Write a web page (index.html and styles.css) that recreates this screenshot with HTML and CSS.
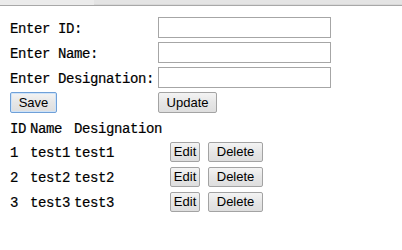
FILE: index.html
```html
<!DOCTYPE html>
<html>
<head>
<meta charset="utf-8">
<link rel="stylesheet" href="styles.css">
</head>
<body>
<div class="topbar"><div class="topbar-seg"></div></div>
<div class="page">
  <table class="form">
    <tr><td class="label">Enter ID:</td><td><input class="field" type="text"></td></tr>
    <tr><td class="label">Enter Name:</td><td><input class="field" type="text"></td></tr>
    <tr><td class="label">Enter Designation:</td><td><input class="field" type="text"></td></tr>
    <tr><td><button class="btn btn-save">Save</button></td><td><button class="btn btn-update">Update</button></td></tr>
  </table>
  <table class="list">
    <tr class="head"><td>ID</td><td>Name</td><td>Designation</td><td></td></tr>
    <tr><td class="num">1</td><td>test1</td><td>test1</td><td class="actions"><button class="btn btn-edit">Edit</button><button class="btn btn-del">Delete</button></td></tr>
    <tr><td class="num">2</td><td>test2</td><td>test2</td><td class="actions"><button class="btn btn-edit">Edit</button><button class="btn btn-del">Delete</button></td></tr>
    <tr><td class="num">3</td><td>test3</td><td>test3</td><td class="actions"><button class="btn btn-edit">Edit</button><button class="btn btn-del">Delete</button></td></tr>
  </table>
</div>
</body>
</html>
```
FILE: styles.css
```css
html, body {
  margin: 0;
  padding: 0;
  background: #ffffff;
}
.topbar {
  height: 5px;
  background: #ebebeb;
  border-bottom: 1px solid #a8a8a8;
}
.topbar-seg {
  margin-left: 94px;
  height: 4px;
  border-bottom: 1px solid #d9d9d9;
  background: #e4e4e4;
}
.page {
  padding: 8px 8px 8px 7px;
  font-family: "Liberation Mono", "DejaVu Sans Mono", monospace;
  font-size: 14px;
  letter-spacing: -0.4px;
  color: #000;
  -webkit-text-stroke: 0.2px #000;
}
table {
  border-spacing: 2px;
  border-collapse: separate;
  font: inherit;
}
td {
  padding: 1px;
  white-space: nowrap;
  vertical-align: middle;
}
.form td.label {
  padding-top: 3px;
}
.field {
  display: block;
  width: 173px;
  height: 21px;
  box-sizing: border-box;
  margin: 0;
  border: 1px solid #a6a6a6;
  background: #fff;
  padding: 0 2px;
}
.btn {
  display: block;
  box-sizing: border-box;
  height: 20px;
  margin: 0;
  padding: 0 6px;
  font-family: "Liberation Sans", Arial, sans-serif;
  font-size: 13px;
  letter-spacing: 0;
  -webkit-text-stroke: 0;
  color: #000;
  border: 1px solid #a3a3a3;
  border-radius: 2px;
  background: linear-gradient(#f4f4f4, #e6e6e6 50%, #dedede);
  line-height: 18px;
}
.btn-save {
  width: 47px;
  height: 21px;
  border-color: #6fa0d8;
  box-shadow: inset 0 0 0 1px #cfe3f8;
}
.btn-update {
  width: 59px;
  height: 21px;
}
.list .head td {
  height: 19px;
}
.list td {
  height: 21px;
}
.actions {
  display: flex;
  gap: 8px;
  padding-left: 5px !important;
}
.btn-edit {
  width: 30px;
  padding: 0;
}
.btn-del {
  width: 55px;
  padding: 0;
}
```
